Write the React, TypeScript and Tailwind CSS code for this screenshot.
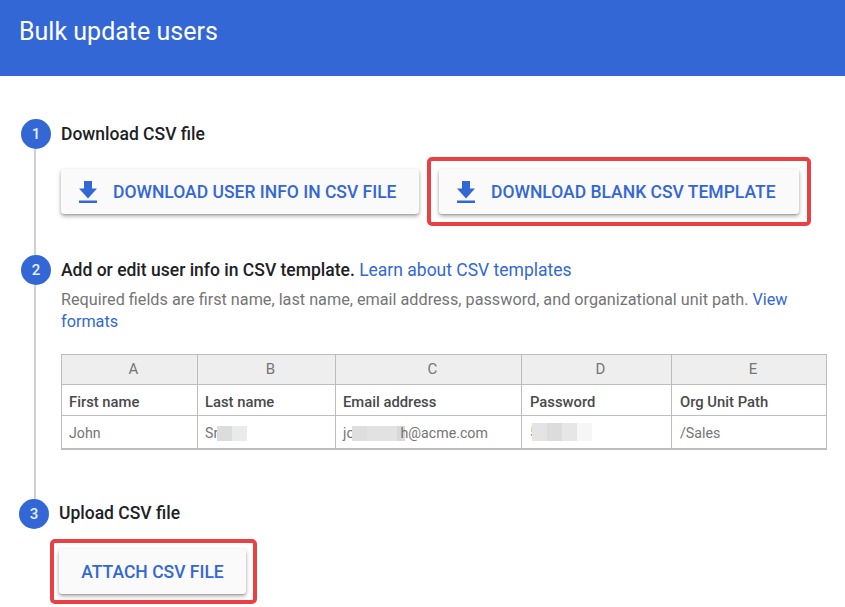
import type { ReactNode } from "react";

const COLS = ["w-[136px]", "w-[138px]", "w-[186px]", "w-[150px]", "flex-1"];

function DownloadIcon() {
  return (
    <svg viewBox="0 0 18 22" className="h-[22px] w-[18px] shrink-0" fill="#3367d6">
      <path d="M5 0h8v7.5h5l-9 10L0 7.5h5z" />
      <rect x="0" y="19.5" width="18" height="2.5" />
    </svg>
  );
}

function Step({ n, line, children }: { n: number; line?: boolean; children: ReactNode }) {
  return (
    <div className="flex">
      <div className="flex w-[30px] shrink-0 flex-col">
        <div className="flex h-[30px] w-[30px] items-center justify-center rounded-full bg-[#3367d6] text-[15px] font-medium text-[#e8eefb]">
          {n}
        </div>
        {line && <div className="ml-[13px] w-[2px] flex-1 bg-[#d0d0d0]" />}
      </div>
      <div className="ml-[10px] min-w-0 flex-1">{children}</div>
    </div>
  );
}

function Btn({ icon, label, className }: { icon?: boolean; label: string; className: string }) {
  return (
    <button className={`flex h-[45px] items-center rounded-[3px] bg-[#fafafa] text-[17.5px] font-medium text-[#3367d6] shadow-[0_1px_1px_rgba(0,0,0,0.12),0_2px_4px_rgba(0,0,0,0.35)] ${className}`}>
      {icon && <DownloadIcon />}
      <span className={`pt-[2px] ${icon ? "ml-[16px]" : ""}`}>{label}</span>
    </button>
  );
}

function Blur({ w, c, h = "h-[15px]" }: { w: string; c: string; h?: string }) {
  return <span className={`inline-block ${h} ${w} ${c}`} />;
}

function Row({ cells, className }: { cells: ReactNode[]; className: string }) {
  return (
    <div className={`flex ${className}`}>
      {cells.map((c, i) => (
        <div key={i} className={`${COLS[i]} flex items-center border-r border-[#bdbdbd] last:border-r-0`}>
          {c}
        </div>
      ))}
    </div>
  );
}

export default function App() {
  return (
    <div className="h-[607px] w-[845px] overflow-hidden bg-white font-['Roboto',sans-serif]">
      <div className="flex h-[76px] items-start bg-[#3367d6] pl-[19px] pt-[16px] text-[25px] leading-[32px] font-normal text-white">
        Bulk update users
      </div>

      <div className="pl-[21px] pt-[43px]">
        <Step n={1} line>
          <div className="h-[38px] text-[17.5px] leading-[30px] font-medium text-[#202124]">Download CSV file</div>
          <div className="flex items-center">
            <Btn icon label="DOWNLOAD USER INFO IN CSV FILE" className="w-[358px] pl-[18px]" />
            <div className="ml-[8px] rounded-[5px] border-[4px] border-[#ea4044] p-[8px]">
              <Btn icon label="DOWNLOAD BLANK CSV TEMPLATE" className="w-[360px] pl-[18px]" />
            </div>
          </div>
          <div className="h-[29px]" />
        </Step>

        <Step n={2} line>
          <div className="text-[17.5px] leading-[30px] text-[#202124]">
            <span className="font-medium">Add or edit user info in CSV template.</span>{" "}
            <span className="text-[#3367d6]">Learn about CSV templates</span>
          </div>
          <p className="mt-[4px] w-[740px] text-[16.23px] leading-[22px] text-[#757575]">
            Required fields are first name, last name, email address, password, and organizational unit path.{" "}
            <span className="text-[#3367d6]">View</span> <span className="text-[#3367d6]">formats</span>
          </p>

          <div className="mt-[21px] w-[766px] border border-b-2 border-[#bdbdbd] text-[14.2px] text-[#5f6368]">
            <Row
              className="h-[30px] border-b border-[#bdbdbd] bg-[#eeeeee] text-[15px] text-[#757575]"
              cells={["A", "B", "C", "D", "E"].map((l) => (
                <span key={l} className="w-full pl-[8px] text-center">{l}</span>
              ))}
            />
            <Row
              className="h-[31px] border-b border-[#bdbdbd] text-[14.8px] font-medium text-[#4a4a4a]"
              cells={["First name", "Last name", "Email address", "Password", "Org Unit Path"].map((l, i) => (
                <span key={l} className={`pt-[4px] ${i > 2 ? "pl-[8px]" : "pl-[7px]"}`}>{l}</span>
              ))}
            />
            <Row
              className="h-[32px] text-[#757575]"
              cells={[
                <span className="pl-[7px] pt-[3px]">John</span>,
                <span className="flex items-center pl-[7px] pt-[3px]">
                  Sr
                  <span className="-ml-[1px] flex">
                    <Blur w="w-[15px]" c="bg-[#dcdcdc]" />
                    <Blur w="w-[15px]" c="bg-[#e9ebeb]" />
                  </span>
                </span>,
                <span className="flex items-center pl-[7px] pt-[3px]">
                  jo
                  <span className="-ml-[3px] flex">
                    <Blur w="w-[15px]" c="bg-[#dedede]" />
                    <Blur w="w-[30px]" c="bg-[#e2e2e2]" />
                    <Blur w="w-[8px]" c="bg-[#d8d8d8]" />
                  </span>
                  <span className="-ml-[4px]">h@acme.com</span>
                </span>,
                <span className="flex items-center pl-[8px] pt-[1px]">
                  5
                  <span className="-ml-[6px] flex">
                    <Blur w="w-[15px]" c="bg-[#e4e4e4]" h="h-[18px]" />
                    <Blur w="w-[15px]" c="bg-[#dcdcdc]" h="h-[18px]" />
                    <Blur w="w-[15px]" c="bg-[#e6e6e6]" h="h-[18px]" />
                    <Blur w="w-[15px]" c="bg-[#f6f6f6]" h="h-[18px]" />
                  </span>
                </span>,
                <span className="pl-[8px] pt-[3px]">/Sales</span>,
              ]}
            />
          </div>
          <div className="h-[49px]" />
        </Step>
      </div>

      <div className="pl-[19px]">
        <Step n={3}>
          <div className="h-[40px] text-[17.5px] leading-[29px] font-medium text-[#202124]">Upload CSV file</div>
          <div className="-ml-[9px] w-fit rounded-[5px] border-[4px] border-[#ea4044] pb-[6px] pl-[5px] pr-[7px] pt-[6px]">
            <Btn label="ATTACH CSV FILE" className="w-[187px] justify-center" />
          </div>
        </Step>
      </div>
    </div>
  );
}
